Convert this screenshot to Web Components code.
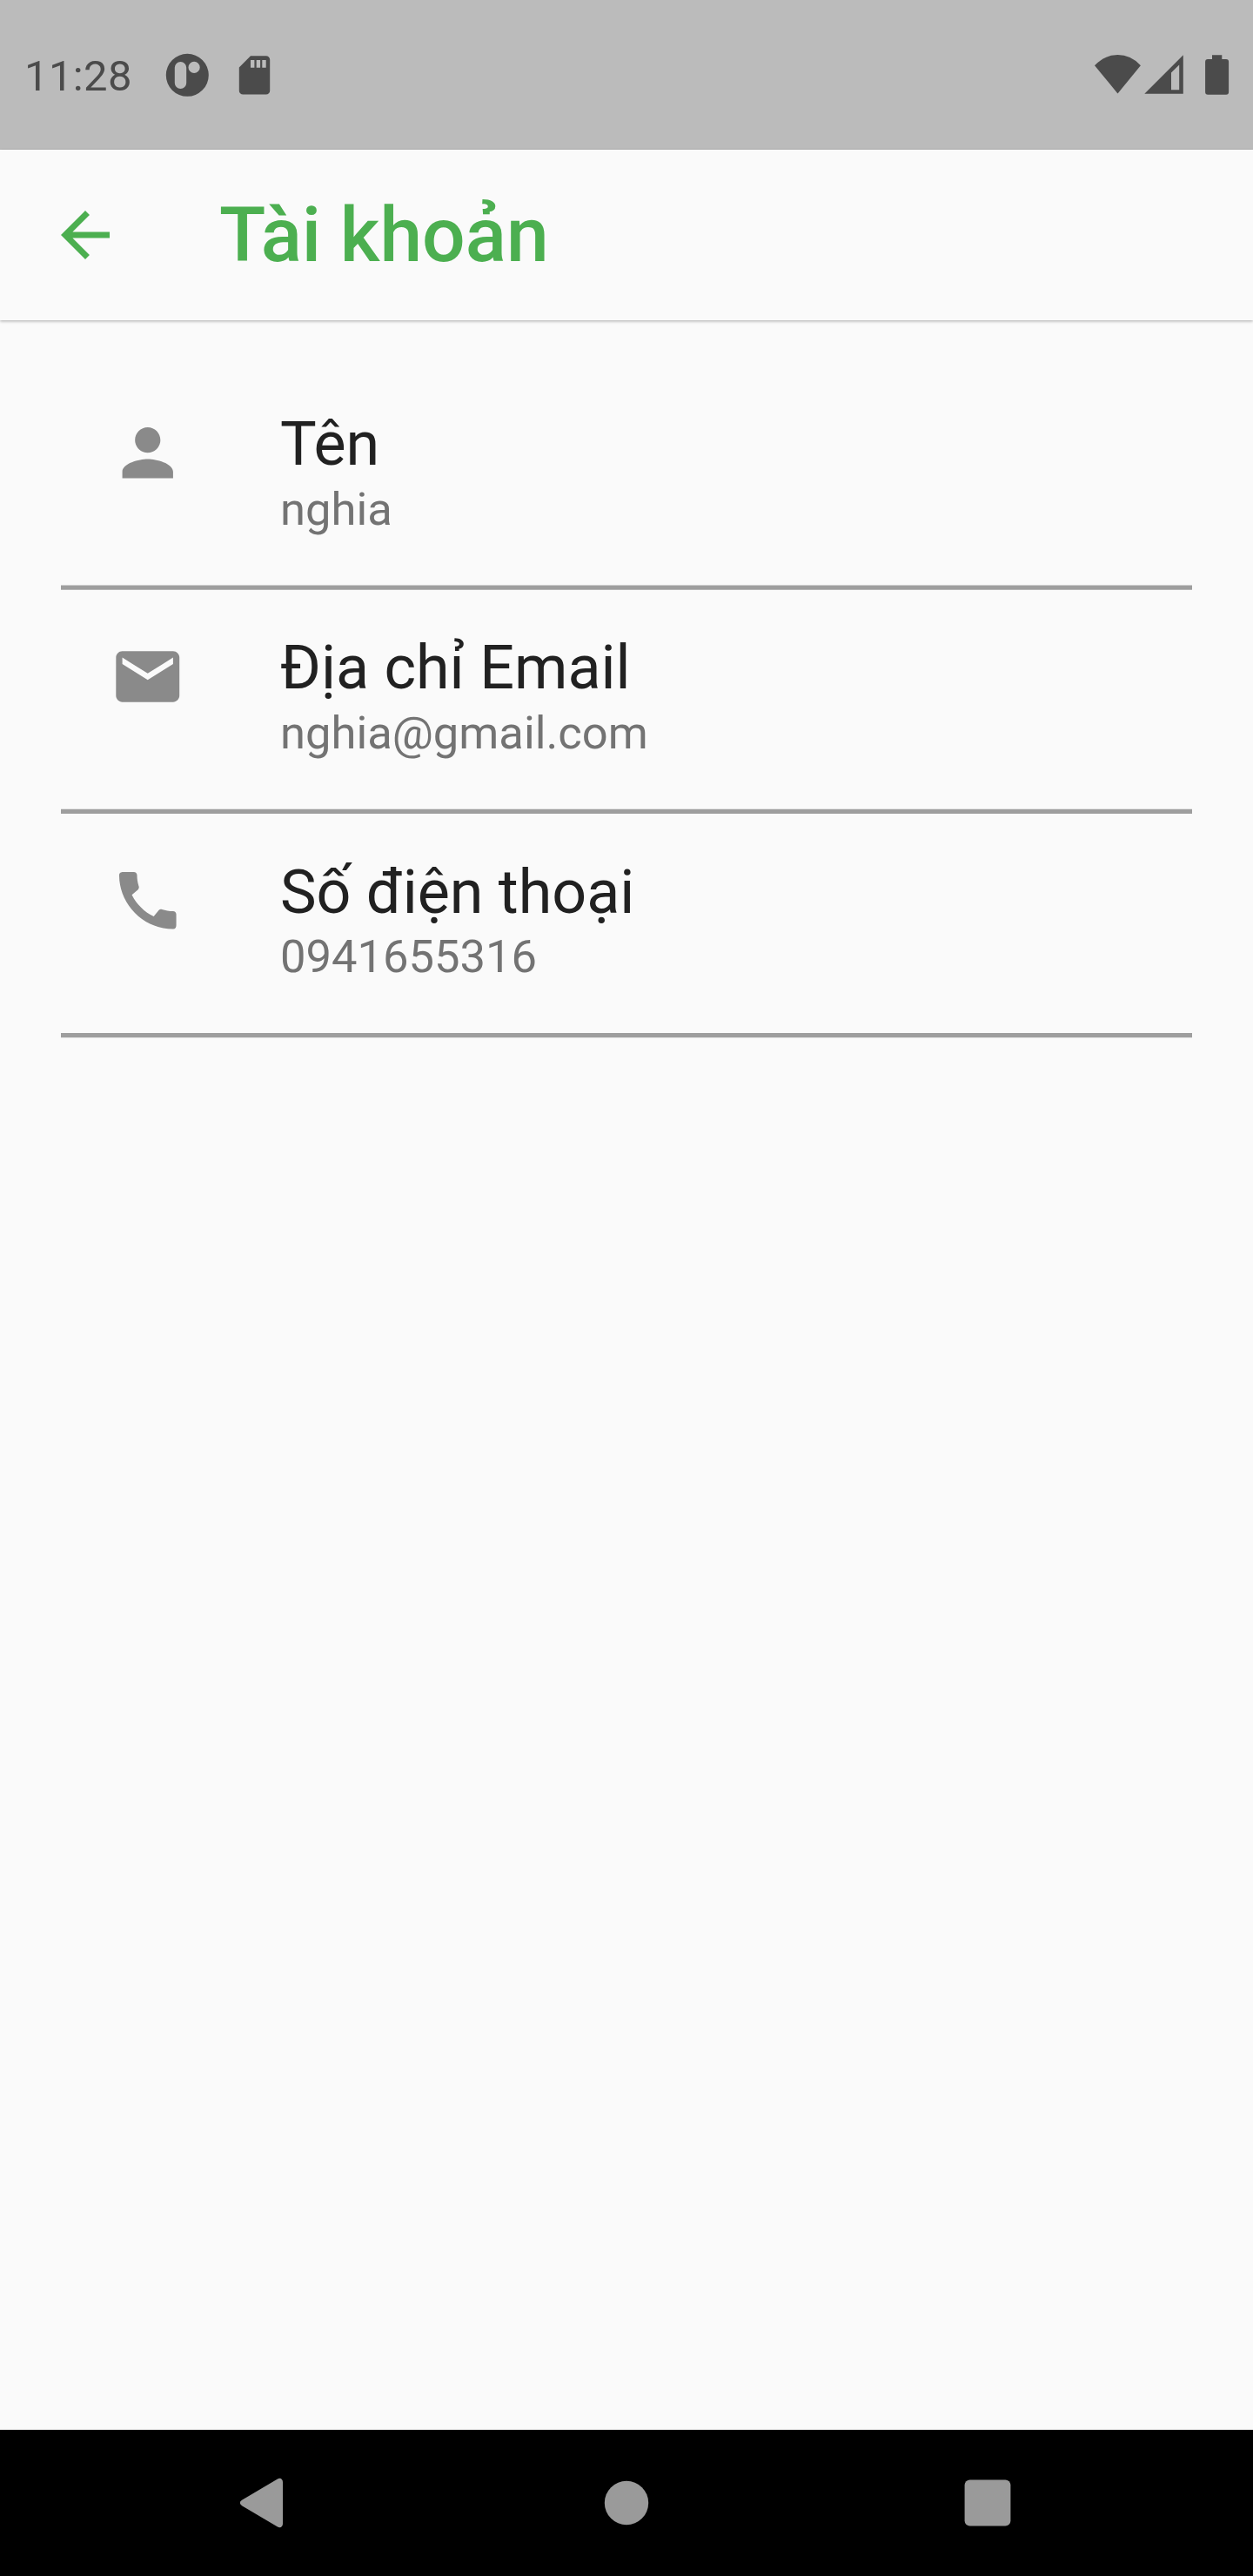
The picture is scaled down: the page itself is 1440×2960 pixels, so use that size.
<!DOCTYPE html>
<html lang="vi">
<head>
<meta charset="utf-8">
<title>Tài khoản</title>
<style>
html,body{margin:0;padding:0;background:#fafafa}
body{font-family:Roboto,sans-serif}
</style>
</head>
<body>
<account-screen></account-screen>
<script>
const define = (name, html) => {
  const t = document.createElement('template');
  t.innerHTML = html;
  customElements.define(name, class extends HTMLElement {
    constructor() {
      super();
      this.attachShadow({ mode: 'open' }).appendChild(t.content.cloneNode(true));
    }
  });
};

define('status-bar', `
<style>
:host{display:flex;justify-content:space-between;box-sizing:border-box;height:172px;padding:58px 24px 0 28px;background:#bbb;color:#4b4b4b;fill:currentColor}
.left,.right{display:flex;height:60px}
.clock{font-size:49px;line-height:60px;width:158px;letter-spacing:.35px}
svg{display:block}
</style>
<div class="left">
  <div class="clock"><slot></slot></div>
  <svg width="60" height="60" viewBox="186 58 60 60"><path fill-rule="evenodd" d="M215.3 61.8a24.5 24.5 0 1 0 0 49a24.5 24.5 0 1 0 0-49zM207.5 71a6.7 6.7 0 0 1 6.7 6.7v17.6a6.7 6.7 0 0 1-13.4 0v-17.6a6.7 6.7 0 0 1 6.7-6.7zM223.1 70.8a6.6 6.6 0 1 1 0 13.2a6.6 6.6 0 1 1 0-13.2z"/></svg>
  <svg width="80" height="60" viewBox="246 58 80 60"><path fill-rule="evenodd" d="M288 64.2h17.8a4.4 4.4 0 0 1 4.4 4.4v35.6a4.4 4.4 0 0 1-4.4 4.4h-26.6a4.4 4.4 0 0 1-4.4-4.4v-26.7zM288 69v8.8h4.4v-8.8zM294.7 69v8.8h4.4v-8.8zM301.3 69v8.8h4.4v-8.8z"/></svg>
</div>
<div class="right">
  <svg width="60" height="60" viewBox="1254 58 60 60"><path d="M1284.5 107.5L1258 75.2Q1269.5 63.1 1284.5 63.1T1310.9 75.2z"/></svg>
  <svg width="56" height="60" viewBox="1314 58 56 60"><path fill-rule="evenodd" d="M1315.3 107.8L1359.8 63.3V107.8zM1346 83.6V103.2H1355.2V74.4z"/></svg>
  <svg width="46" height="60" viewBox="1370 58 46 60"><path d="M1393 63.2h11.3v4.8h4.8a3 3 0 0 1 3 3v34.7a3 3 0 0 1-3 3h-21a3 3 0 0 1-3-3v-34.7a3 3 0 0 1 3-3h4.9z"/></svg>
</div>`);

define('app-bar', `
<style>
:host{display:flex;align-items:center;box-sizing:border-box;height:196px;padding-left:56px;gap:112px;color:#4caf50;background:#fafafa;box-shadow:0 1px 3px rgba(0,0,0,.24),0 2px 4px rgba(0,0,0,.08);position:relative}
svg{display:block;fill:currentColor}
h1{margin:0;font-size:87.5px;line-height:104px;font-weight:500;white-space:nowrap}
</style>
<svg width="84" height="84" viewBox="0 0 24 24"><path d="M20 11H7.83l5.59-5.59L12 4l-8 8 8 8 1.41-1.41L7.83 13H20v-2z"/></svg>
<h1><slot></slot></h1>`);

define('info-row', `
<style>
:host{display:block;height:257px}
.tile{display:flex;height:252px;box-sizing:border-box;padding-left:56px}
.icon{width:196px;padding-top:56px}
.text{display:flex;flex-direction:column;justify-content:flex-end;gap:3px;height:196px}
.title{font-size:70px;line-height:82px;color:#212121}
:host([last]) .text{gap:2px}
.sub{font-size:52.5px;line-height:62px;color:#737373}
</style>
<div class="tile">
  <div class="icon"><slot name="icon"></slot></div>
  <div class="text"><div class="title"><slot name="title"></slot></div><div class="sub"><slot></slot></div></div>
</div>
<slot name="rule"></slot>`);

const glyphs = {
  person: 'M12 12c2.21 0 4-1.79 4-4s-1.79-4-4-4-4 1.79-4 4 1.79 4 4 4zm0 2c-2.67 0-8 1.34-8 4v2h16v-2c0-2.66-5.33-4-8-4z',
  mail: 'M20 4H4c-1.1 0-1.99.9-1.99 2L2 18c0 1.1.9 2 2 2h16c1.1 0 2-.9 2-2V6c0-1.1-.9-2-2-2zm0 4l-8 5-8-5V6l8 5 8-5v2z',
  phone: 'M20.01 15.38c-1.23 0-2.42-.2-3.53-.56-.35-.12-.74-.03-1.01.24l-1.57 1.97c-2.83-1.35-5.48-3.9-6.89-6.83l1.95-1.66c.27-.28.35-.67.24-1.02-.37-1.11-.56-2.3-.56-3.53 0-.54-.45-.99-.99-.99H4.19C3.65 3 3 3.24 3 3.99 3 13.28 10.73 21 20.01 21c.71 0 .99-.63.99-1.18v-3.45c0-.54-.45-.99-.99-.99z'
};
customElements.define('material-icon', class extends HTMLElement {
  connectedCallback() {
    const dy = this.getAttribute('shift') || 0;
    this.attachShadow({ mode: 'open' }).innerHTML = `
<style>:host{display:block}svg{display:block;overflow:visible;fill:#8a8a8a}</style>
<svg width="88" height="88" viewBox="0 0 88 88"><path transform="translate(0 ${dy}) scale(3.6458)" d="${glyphs[this.getAttribute('name')]}"/></svg>`;
  }
});
customElements.define('rule-line', class extends HTMLElement {
  connectedCallback() {
    const dy = this.getAttribute('shift') || 0;
    this.attachShadow({ mode: 'open' }).innerHTML = `
<style>:host{display:block}svg{display:block;overflow:visible}</style>
<svg width="1300" height="5"><rect y="${dy}" width="1300" height="5.25" fill="#9e9e9e"/></svg>`;
  }
});

define('nav-bar', `
<style>
:host{display:flex;justify-content:center;align-items:center;gap:317px;height:168px;background:#000}
svg{display:block;fill:#9a9a9a}
</style>
<svg width="98" height="98" viewBox="0 0 98 98"><path d="M63 21.5C66 19.700 69 21.500 69 25V73C69 76.500 66 78.300 63 76.500L22 52.200Q17.500 49 22 45.800z"/></svg>
<svg width="98" height="98" viewBox="0 0 98 98"><circle cx="49" cy="49" r="25.2"/></svg>
<svg width="98" height="98" viewBox="0 0 98 98"><rect x="22.600" y="22.600" width="52.800" height="52.800" rx="6"/></svg>`);

define('account-screen', `
<style>
:host{display:flex;flex-direction:column;height:2960px;background:#fafafa}
main{flex:1;padding:52px 70px 0}
</style>
<status-bar>11:28</status-bar>
<app-bar>Tài khoản</app-bar>
<main>
  <info-row><material-icon slot="icon" name="person" shift="0.5"></material-icon><span slot="title">Tên</span>nghia<rule-line slot="rule" shift="0.5"></rule-line></info-row>
  <info-row><material-icon slot="icon" name="mail" shift="0.75"></material-icon><span slot="title">Địa chỉ Email</span>nghia@gmail.com<rule-line slot="rule" shift="0.75"></rule-line></info-row>
  <info-row last><material-icon slot="icon" name="phone" shift="1"></material-icon><span slot="title">Số điện thoại</span>0941655316<rule-line slot="rule" shift="1"></rule-line></info-row>
</main>
<nav-bar></nav-bar>`);
</script>
</body>
</html>
